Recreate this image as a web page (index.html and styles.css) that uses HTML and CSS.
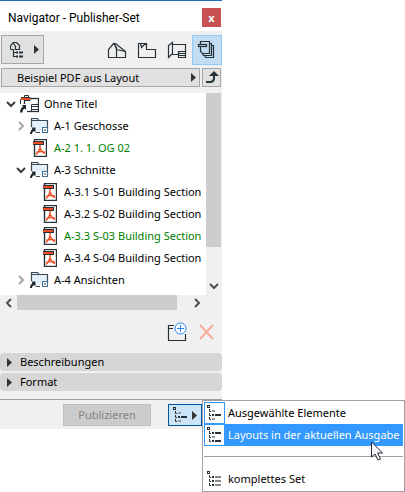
FILE: index.html
```html
<!DOCTYPE html>
<html lang="de">

<head>
  <meta charset="utf-8">
  <meta name="viewport" content="width=device-width, initial-scale=1">
  <title>Navigator - Publisher-Set</title>
  <link rel="stylesheet" href="styles.css">
</head>

<body>

  <!-- shared icons -->
  <svg class="sprite" aria-hidden="true">
    <symbol id="arrow" viewBox="0 0 5 9">
      <path d="M0 0v9l5-4.5z" fill="#333" />
    </symbol>
    <symbol id="chevron-down" viewBox="0 0 10 7">
      <path d="M1 1l4 4 4-4" fill="none" stroke="currentColor" stroke-width="2" />
    </symbol>
    <symbol id="chevron-right" viewBox="0 0 7 10">
      <path d="M1 1l4 4-4 4" fill="none" stroke="currentColor" stroke-width="2" />
    </symbol>
    <symbol id="set" viewBox="0 0 19 18">
      <rect x="4.500" y="3.500" width="14" height="13" fill="#fff" stroke="#263238" stroke-width="1.300" />
      <path d="M.5 9V4.500h2M4.500 2V.5h4V2" fill="none" stroke="#263238" />
      <path d="M1 2.500h9v3H4" fill="none" stroke="#263238" />
      <path d="M1 3h9v2H1z" fill="#f04b23" />
      <path d="M11.500 9.500h7v7h-7zM12 11.500h6M12 14.500h6" stroke="#263238" fill="none" />
      <path d="M0 9h7v9H0z" fill="#fff" />
      <path d="M2 10h4v5l-1.500-1.500C3 14.500 2.500 16 2.500 17.500H0c0-2.500 1-4.500 3-6z" fill="#1d272d" />
    </symbol>
    <symbol id="folder" viewBox="0 0 19 18">
      <path d="M1.500 16.500v-15h6l1.500 2h8.500v13z" fill="#e4f0fc" stroke="#3c4a52" stroke-width="1.200" />
      <path d="M2 3.500h8" stroke="#3c4a52" />
      <path d="M0 14h19v4H0zM0 10h7v8H0z" fill="#fff" />
      <path d="M6 9h6v5H6z" fill="#e4f0fc" />
      <path d="M1.500 10.500h4v5L4 14c-1.500 1-2 2-2 3H0c0-2 1-4 2.500-5z" fill="#1d272d" />
      <path d="M6 15.500h4" stroke="#3c4a52" />
      <rect x="12.500" y="10.500" width="5" height="5" fill="#fff" stroke="#3f6f94" />
      <path d="M15 12v2" stroke="#263238" />
    </symbol>
    <symbol id="pdf" viewBox="0 0 14 18">
      <rect x="1.500" y=".5" width="12" height="17" fill="#fff" stroke="#263238" stroke-width="1.400" />
      <path d="M0 2h11v4H0z" fill="#263238" />
      <path d="M0 3h10v2H0z" fill="#f04b23" />
      <path d="M7 6v3c-.5 2.500-2 4.500-4 6.500M7 9c1 2.500 2.500 4.500 5 5.500M3.500 13.500c2-1 5.500-1.500 8.500 0" fill="none" stroke="#f04b23" stroke-width="1.400" />
    </symbol>
    <symbol id="list-first" viewBox="0 0 15 16">
      <rect x=".5" y=".5" width="2" height="2" fill="none" stroke="#263238" />
      <path d="M2.500 4v2.500H4M2.500 8v2.500H4M2.500 12v2.500H4" fill="none" stroke="#263238" />
      <path d="M5 6h3M5 14h3" stroke="#999" stroke-width="2" />
      <path d="M5 10h2M8 10h6" stroke="#263238" stroke-width="2" />
    </symbol>
    <symbol id="list-layouts" viewBox="0 0 15 16">
      <rect x=".5" y=".5" width="2" height="2" fill="none" stroke="#263238" />
      <path d="M2.500 4v2.500H4M2.500 8v2.500H4M2.500 12v2.500H4" fill="none" stroke="#263238" />
      <path d="M5 6h2M8 6h6M5 14h2M8 14h6" stroke="#263238" stroke-width="2" />
      <path d="M5 10h3" stroke="#999" stroke-width="2" />
    </symbol>
    <symbol id="list-all" viewBox="0 0 15 16">
      <rect x=".5" y=".5" width="2" height="2" fill="none" stroke="#263238" />
      <path d="M2.500 4v2.500H4M2.500 8v2.500H4M2.500 12v2.500H4" fill="none" stroke="#263238" />
      <path d="M5 6h2M5 10h2M5 14h2" stroke="#263238" stroke-width="2" />
      <path d="M8 6h6M8 10h6M8 14h6" stroke="#888" stroke-width="2" />
    </symbol>
  </svg>

  <main class="navigator">
    <header class="titlebar">
      <h1>Navigator - Publisher-Set</h1>
      <button type="button" class="close" aria-label="Schließen">x</button>
    </header>

    <div class="toolbar">
      <button type="button" class="chooser" aria-label="Projekt wählen">
        <svg width="14" height="16" viewBox="0 0 14 16" fill="none" stroke="#263238" stroke-width="1.200">
          <path d="M.5 7.500v-4l3-3h3l3 3v4h-4v-3l-2-3M.5 7.500h3M3.500 7v7.500H8M3.500 10.500H8" />
          <path d="M6 10.500h2M9 10.500h4M6 14.500h2M9 14.500h4" stroke-width="2" />
        </svg>
        <svg width="5" height="9"><use href="#arrow" /></svg>
      </button>
      <nav class="maps">
        <button type="button" aria-label="Projekt-Mappe">
          <svg width="20" height="18" viewBox="0 0 20 18" fill="none" stroke="#263238" stroke-width="1.200">
            <path d="M1.500 16.500V8.500l5-6 3 4v10zM6.500 2.500h2l10 8v6h-9M7.500 2.500l2 6 9 2" />
          </svg>
        </button>
        <button type="button" aria-label="Ausschnitt-Mappe">
          <svg width="20" height="18" viewBox="0 0 20 18" fill="none" stroke="#263238" stroke-width="1.200">
            <path d="M3.500 2.500h-2v14h17v-8h-9v-6h-2M3.500 2.500l1 4 4-4z" />
          </svg>
        </button>
        <button type="button" aria-label="Layoutbuch">
          <svg width="20" height="18" viewBox="0 0 20 18" fill="none" stroke="#263238" stroke-width="1.200">
            <path d="M5.500 3.500h13v7M5.500 1.500v11l-4 4v-12zM5.500 13.500h6M11.500 17v-6.500h7V17M12 12.500h6M12 14.500h6M12 16.500h6" />
          </svg>
        </button>
        <button type="button" class="active" aria-label="Publisher-Sets">
          <svg width="20" height="20" viewBox="0 0 20 20" fill="none" stroke="#263238" stroke-width="1.200">
            <path d="M3.500 4V1.500h9v12h-7l-2-2V7M12.500 3.500h2v12h-8l-1-2M14.500 5.500h2v12h-8l-1-2" />
            <rect x="1.500" y="4.500" width="8" height="2" />
          </svg>
        </button>
      </nav>
    </div>

    <div class="setbar">
      <button type="button" class="set-name">
        <span>Beispiel PDF aus Layout</span>
        <svg width="5" height="9"><use href="#arrow" /></svg>
      </button>
      <button type="button" class="up" aria-label="Eine Ebene nach oben">
        <svg width="14" height="13" viewBox="0 0 14 13">
          <path d="M1 11h4c3 0 4-1 4-4V3" fill="none" stroke="#263238" stroke-width="2" />
          <path d="M9 0l5 5H4z" fill="#263238" />
        </svg>
      </button>
    </div>

    <section class="tree-box">
      <ul class="tree">
        <li>
          <div class="row">
            <svg class="toggle" width="10" height="7"><use href="#chevron-down" /></svg>
            <svg class="icon" width="19" height="18"><use href="#set" /></svg>
            <span>Ohne Titel</span>
          </div>
          <ul>
            <li>
              <div class="row">
                <svg class="toggle closed" width="7" height="10"><use href="#chevron-right" /></svg>
                <svg class="icon" width="19" height="18"><use href="#folder" /></svg>
                <span>A-1 Geschosse</span>
              </div>
            </li>
            <li>
              <div class="row current">
                <i class="toggle"></i>
                <svg class="icon" width="14" height="18"><use href="#pdf" /></svg>
                <span>A-2 1. 1. OG 02</span>
              </div>
            </li>
            <li>
              <div class="row">
                <svg class="toggle" width="10" height="7"><use href="#chevron-down" /></svg>
                <svg class="icon" width="19" height="18"><use href="#folder" /></svg>
                <span>A-3 Schnitte</span>
              </div>
              <ul>
                <li>
                  <div class="row">
                    <i class="toggle"></i>
                    <svg class="icon" width="14" height="18"><use href="#pdf" /></svg>
                    <span>A-3.1 S-01 Building Section</span>
                  </div>
                </li>
                <li>
                  <div class="row">
                    <i class="toggle"></i>
                    <svg class="icon" width="14" height="18"><use href="#pdf" /></svg>
                    <span>A-3.2 S-02 Building Section</span>
                  </div>
                </li>
                <li>
                  <div class="row current">
                    <i class="toggle"></i>
                    <svg class="icon" width="14" height="18"><use href="#pdf" /></svg>
                    <span>A-3.3 S-03 Building Section</span>
                  </div>
                </li>
                <li>
                  <div class="row">
                    <i class="toggle"></i>
                    <svg class="icon" width="14" height="18"><use href="#pdf" /></svg>
                    <span>A-3.4 S-04 Building Section</span>
                  </div>
                </li>
              </ul>
            </li>
            <li>
              <div class="row">
                <svg class="toggle closed" width="7" height="10"><use href="#chevron-right" /></svg>
                <svg class="icon" width="19" height="18"><use href="#folder" /></svg>
                <span>A-4 Ansichten</span>
              </div>
            </li>
          </ul>
        </li>
      </ul>
      <div class="scroll-y">
        <div class="thumb"></div>
        <button type="button" aria-label="Nach unten">
          <svg width="10" height="7"><use href="#chevron-down" /></svg>
        </button>
      </div>
      <div class="scroll-x">
        <button type="button" class="flip" aria-label="Nach links">
          <svg width="7" height="10"><use href="#chevron-right" /></svg>
        </button>
        <div class="track"><div class="thumb"></div></div>
        <button type="button" aria-label="Nach rechts">
          <svg width="7" height="10"><use href="#chevron-right" /></svg>
        </button>
      </div>
    </section>

    <div class="actions">
      <button type="button" aria-label="Neuer Ordner">
        <svg width="20" height="20" viewBox="0 0 20 20" fill="none">
          <path d="M7 3.500H1.500v15h17V12M2 6.500h4" stroke="#263238" stroke-width="1.200" />
          <circle cx="13.500" cy="6.500" r="5.500" fill="#fff" stroke="#2a7fff" />
          <path d="M13.500 3v7M10 6.500h7" stroke="#2a7fff" />
        </svg>
      </button>
      <button type="button" disabled aria-label="Löschen">
        <svg width="15" height="16" viewBox="0 0 15 16">
          <path d="M1 1l13 14M14 1L1 15" stroke="#fcab98" stroke-width="2" />
        </svg>
      </button>
    </div>

    <div class="panels">
      <button type="button" aria-expanded="false">
        <svg width="5" height="9"><use href="#arrow" /></svg>
        Beschreibungen
      </button>
      <button type="button" aria-expanded="false">
        <svg width="5" height="9"><use href="#arrow" /></svg>
        Format
      </button>
    </div>

    <footer class="footer">
      <button type="button" class="publish" disabled>Publizieren</button>
      <div class="scope">
        <button type="button" class="scope-button" aria-haspopup="menu" aria-expanded="true" aria-label="Umfang">
          <svg width="15" height="16"><use href="#list-first" /></svg>
          <svg width="5" height="9"><use href="#arrow" /></svg>
        </button>
        <div class="menu" role="menu">
          <button type="button" role="menuitem" class="framed">
            <span class="mark"><svg width="15" height="16"><use href="#list-first" /></svg></span>
            Ausgewählte Elemente
          </button>
          <button type="button" role="menuitem" class="framed selected">
            <span class="mark"><svg width="15" height="16"><use href="#list-layouts" /></svg></span>
            Layouts in der aktuellen Ausgabe
          </button>
          <hr>
          <button type="button" role="menuitem">
            <span class="mark"><svg width="15" height="16"><use href="#list-all" /></svg></span>
            komplettes Set
          </button>
          <svg class="cursor" width="13" height="20" viewBox="0 0 13 20">
            <path d="M.5 1v15l3.500-3 3 6 2.500-1-3-6h5z" fill="#fff" stroke="#223" />
          </svg>
        </div>
      </div>
    </footer>
  </main>

</body>

</html>
```

FILE: styles.css
```css
* {
  box-sizing: border-box;
}

body {
  margin: 0;
  min-block-size: 100vh;
  background-color: #fff;
  color: #000;
  font: 11px/16px "Noto Sans", "Open Sans", sans-serif;
}

button {
  display: flex;
  align-items: center;
  justify-content: center;
  margin: 0;
  border: 0;
  padding: 0;
  background-color: transparent;
  color: inherit;
  font: inherit;
  white-space: nowrap;
}

svg {
  flex: none;
  display: block;
}

.sprite {
  position: absolute;
  inline-size: 0;
  block-size: 0;
}

.navigator {
  inline-size: 50%;
  min-inline-size: 222px;
  border-block-start: 1px solid #1a6fb8;
  background-color: #f0f0f0;
}

.titlebar {
  display: flex;
  align-items: center;
  justify-content: space-between;
  padding: 7px 1px 4px 8px;
  background-color: #fff;

  h1 {
    margin: 0;
    font: 400 12px/16px Roboto, "Noto Sans", sans-serif;
    white-space: nowrap;
  }
}

.close {
  inline-size: 19px;
  block-size: 19px;
  background-color: #c75050;
  color: #fff;
  font-weight: 700;
}

.toolbar {
  display: flex;
  justify-content: space-between;
  padding: 4px 0 3px 1px;
}

.chooser {
  gap: 10px;
  inline-size: 43px;
  block-size: 29px;
  border: 1px solid #a6a6a6;
  padding-inline-start: 4px;
  background-color: #e1e1e1;
}

.maps {
  display: flex;

  button {
    inline-size: 30px;
    block-size: 30px;
  }

  .active {
    border: 1px solid #90c8f6;
    background-color: #c2dcf2;
  }
}

.setbar {
  display: flex;
  gap: 2px;
  padding: 0 1px 6px;

  button {
    block-size: 19px;
    border: 1px solid #a6a6a6;
    background-color: #e1e1e1;
  }
}

.set-name {
  flex: 1;

  span {
    flex: 1;
    text-align: start;
    padding-inline-start: 15px;
  }

  svg {
    margin-inline-end: 3px;
  }
}

.up {
  inline-size: 19px;
}

.tree-box {
  display: grid;
  grid-template-columns: minmax(0, 1fr) 16px;
  grid-template-rows: auto 16px;
}

.tree {
  overflow: hidden;
  margin: 0;
  padding: 0 0 4px;
  background-color: #fff;
  list-style-type: none;

  ul {
    margin: 0;
    padding-inline-start: 10px;
    list-style-type: none;
  }
}

.row {
  display: grid;
  grid-template-columns: 16px 19px 1fr;
  align-items: center;
  block-size: 22px;
  padding-inline-start: 3px;
  white-space: nowrap;

  .toggle,
  .icon {
    justify-self: center;
  }

  .icon {
    margin-inline-start: 2px;
  }

  span {
    padding-inline-start: 6px;
  }
}

.toggle {
  color: #3c3c3c;
}

.closed {
  color: #a6a6a6;
}

.current {
  color: #008000;
}

.thumb {
  background-color: #cdcdcd;
}

.scroll-y {
  display: flex;
  flex-flow: column;
  color: #505050;

  .thumb {
    flex: 1;
    margin: 0 1px 31px 0;
  }

  button {
    block-size: 17px;
  }
}

.scroll-x {
  display: flex;
  color: #505050;

  button {
    inline-size: 17px;
  }

  .flip {
    transform: rotate(180deg);
  }

  .track {
    flex: 1;
  }

  .thumb {
    inline-size: 93%;
    block-size: 15px;
  }
}

.actions {
  display: flex;
  justify-content: flex-end;
  gap: 12px;
  padding: 11px 8px;
}

.panels {
  display: flex;
  flex-flow: column;
  gap: 2px;
  padding-block-end: 8px;

  button {
    justify-content: flex-start;
    gap: 8px;
    block-size: 18px;
    border-radius: 4px;
    padding-inline-start: 7px;
    background-color: #d6d6d6;
  }
}

.footer {
  display: flex;
  justify-content: flex-end;
  gap: 17px;
  border-block-start: 1px solid #a0a0a0;
  padding: 4px 20px 3px;
}

.publish {
  inline-size: 88px;
  block-size: 22px;
  border: 1px solid #bfbfbf;
  background-color: #ccc;
  color: #838383;
}

.scope {
  position: relative;
}

.scope-button {
  gap: 4px;
  inline-size: 34px;
  block-size: 22px;
  border: 1px solid #00559b;
  background-color: #cce4f7;
}

.menu {
  position: absolute;
  inset-block-start: -4px;
  inset-inline-start: 100%;
  inline-size: max-content;
  border: 1px solid #a0a0a6;
  padding: 1px;
  background-color: #fff;

  button {
    justify-content: flex-start;
    gap: 3px;
    inline-size: 100%;
    block-size: 22px;
    padding-inline-end: 3px;
  }

  hr {
    margin: 10px 0 11px;
    border: 0;
    border-block-end: 1px solid #a0a0a0;
  }
}

.mark {
  display: grid;
  place-items: center;
  inline-size: 21px;
  block-size: 22px;
  border: 1px solid transparent;
}

.framed .mark {
  border-color: #3399ff;
  background-color: #fff;
}

.menu .selected {
  background-color: #3399ff;
  color: #fff;
}

.cursor {
  position: absolute;
  inset-block-start: 40px;
  inset-inline-end: 20px;
}
```
